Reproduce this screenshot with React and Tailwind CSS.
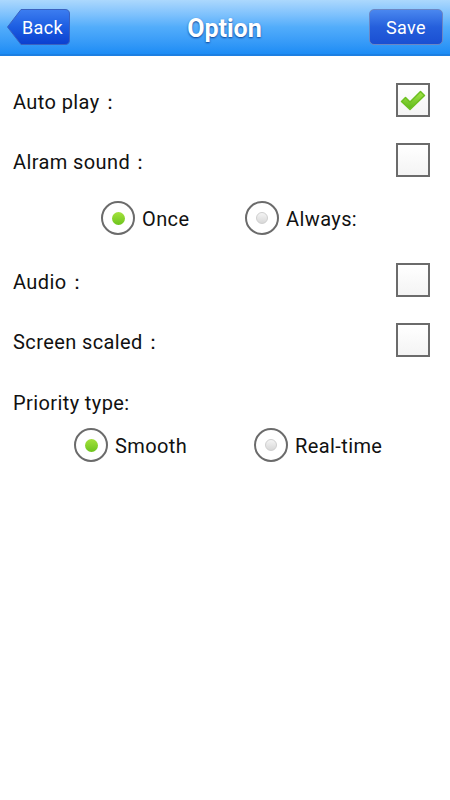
const Checkbox = ({ checked }) => (
    <div className="w-[34px] h-[34px] border-2 border-[#6b6b6b] bg-gradient-to-b from-white to-[#f4f4f4] flex items-center justify-center">
        {checked && (
            <svg width="28" height="24" viewBox="0 0 28 24">
                <defs>
                    <linearGradient id="chk" x1="0" y1="0" x2="0" y2="1">
                        <stop offset="0" stopColor="#a6e44a" />
                        <stop offset="1" stopColor="#5cb81a" />
                    </linearGradient>
                </defs>
                <path d="M2.5 13.5 L6.5 9.5 L11 14 L21.5 3.5 L25.5 7.5 L11 21.5 Z" fill="url(#chk)" stroke="#6cc020" strokeWidth="1.5" strokeLinejoin="round" />
            </svg>
        )}
    </div>
);

const Radio = ({ on, label, width }) => (
    <div className={`flex items-center ${width}`}>
        <div className="w-[34px] h-[34px] rounded-full border-2 border-[#6b6b6b] bg-white flex items-center justify-center">
            {on ? (
                <div className="w-[13px] h-[13px] rounded-full bg-gradient-to-b from-[#a4e23c] to-[#6cc41c]" />
            ) : (
                <div className="w-[12px] h-[12px] rounded-full bg-gradient-to-b from-[#f4f4f4] to-[#d8d8d8] border border-[#cfcfcf]" />
            )}
        </div>
        <span className="ml-[7px] pt-[2px]">{label}</span>
    </div>
);

const Row = ({ label, checked }) => (
    <div className="h-[60px] flex items-center justify-between pl-[13px] pr-[20px]">
        <span className="pt-[4px]">{label}</span>
        <Checkbox checked={checked} />
    </div>
);

export default function App() {
    return (
        <div className="w-[450px] h-[800px] bg-white text-[20px] tracking-[0.4px] text-[#111] font-['Roboto','Liberation_Sans',sans-serif]">
            {/* Header */}
            <div className="h-[56px] bg-gradient-to-b from-[#acd8fd] via-[#52adfb] to-[#1b8cf5] border-b-2 border-[#1c7fe2] flex items-center justify-between px-[7px]">
                <button className="relative w-[63px] h-[36px] text-white text-[18px]">
                    <svg className="absolute inset-0" width="63" height="36" viewBox="0 0 63 36">
                        <defs>
                            <linearGradient id="back" x1="0" y1="0" x2="0" y2="1">
                                <stop offset="0" stopColor="#3d7df0" />
                                <stop offset="0.5" stopColor="#1c5ee2" />
                                <stop offset="1" stopColor="#0b3fcf" />
                            </linearGradient>
                        </defs>
                        <path d="M0.5 18 L14 0.5 L58 0.5 Q62.5 0.5 62.5 5 L62.5 31 Q62.5 35.5 58 35.5 L14 35.5 Z" fill="url(#back)" stroke="#3a62c0" />
                    </svg>
                    <span className="relative pl-[8px]">Back</span>
                </button>
                <h1 className="text-white text-[25px] font-bold tracking-normal [text-shadow:0_1px_2px_rgba(0,40,120,0.8)] pl-[10px] pt-[4px]">Option</h1>
                <button className="w-[74px] h-[36px] rounded-[5px] border border-[#6b86c4] bg-gradient-to-b from-[#4a87ef] via-[#255fdc] to-[#1a4fd2] text-white text-[18px]">
                    Save
                </button>
            </div>

            <div className="pt-[14px]">
                <Row label="Auto play：" checked />
                <Row label="Alram sound：" />
                <div className="h-[56px] flex items-center pl-[101px]">
                    <Radio on label="Once" width="w-[144px]" />
                    <Radio label="Always:" />
                </div>
                <div className="h-[4px]" />
                <Row label="Audio：" />
                <Row label="Screen scaled：" />
                <div className="h-[60px] flex items-center pl-[13px] pt-[5px]">Priority type:</div>
                <div className="h-[30px] flex items-center pl-[74px]">
                    <Radio on label="Smooth" width="w-[180px]" />
                    <Radio label="Real-time" />
                </div>
            </div>
        </div>
    );
}
